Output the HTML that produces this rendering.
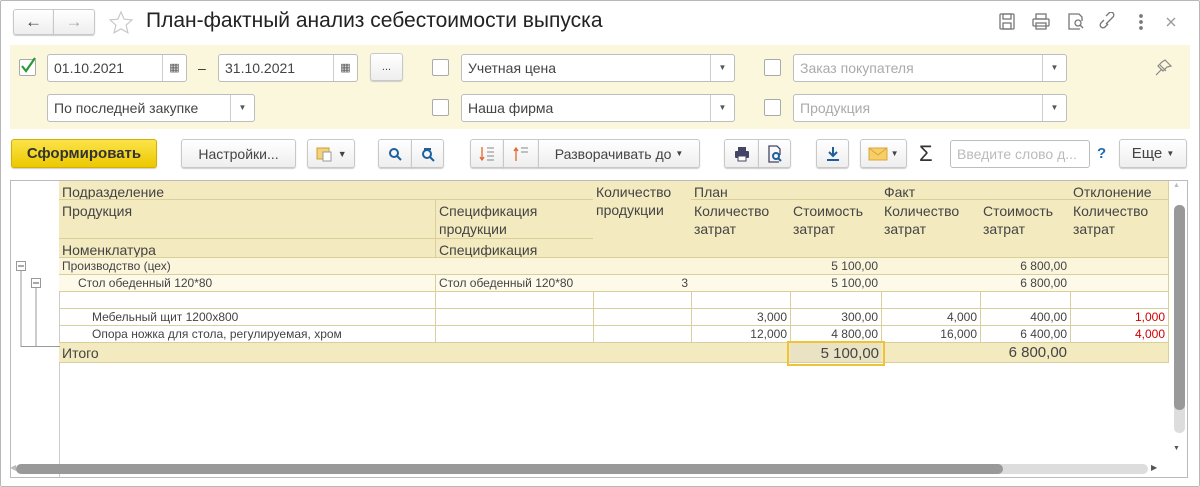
<!DOCTYPE html>
<html><head><meta charset="utf-8"><style>
*{box-sizing:border-box;margin:0;padding:0}
body{width:1200px;height:487px;background:#fff;font-family:"Liberation Sans",sans-serif;color:#333;position:relative;overflow:hidden}
.a{position:absolute}
.win{left:0;top:0;width:1200px;height:487px;border:1px solid #b8b8b8;border-radius:2px}
.btn{position:absolute;background:linear-gradient(#fff,#eee);border:1px solid #c8c8c8;border-radius:3px;box-shadow:0 1px 1px #ccc;font-size:14px;color:#444;display:flex;align-items:center;justify-content:center}
.fld{position:absolute;background:#fff;border:1px solid #bdbdbd;border-radius:3px;height:28px;font-size:14px;color:#444;padding-left:6px;line-height:26px}
.fld .dd{position:absolute;right:0;top:0;bottom:0;width:24px;border-left:1px solid #ccc;font-size:8px;text-align:center;line-height:26px;color:#555}
.cb{position:absolute;width:17px;height:17px;border:1px solid #aaa;border-radius:2px;background:#fff}
.c{position:absolute;border-right:1px solid #d8cf9c;border-bottom:1px solid #d8cf9c;font-size:14px;padding:2px 3px;color:#444;line-height:18px;white-space:nowrap;overflow:hidden}
.d{font-size:12px;padding:0 3px;line-height:16px}
.r{text-align:right}
.h{background:#f3eac0}
.red{color:#d20000}
</style></head><body>
<div class="a win"></div>
<div class="btn" style="left:13px;top:9px;width:41px;height:26px;border-radius:3px 0 0 3px;font-size:17px">&#8592;</div>
<div class="btn" style="left:53px;top:9px;width:42px;height:26px;border-radius:0 3px 3px 0;font-size:17px;color:#aaa">&#8594;</div>
<svg class="a" style="left:108px;top:10px" width="26" height="26" viewBox="0 0 26 26"><path d="M13 2l3.2 7.2 7.8.7-5.9 5.2 1.8 7.7L13 18.8 6.1 22.8l1.8-7.7L2 9.9l7.8-.7z" fill="none" stroke="#c8c8c8" stroke-width="1.2"/></svg>
<div class="a" style="left:146px;top:9px;font-size:21px;color:#222">План-фактный анализ себестоимости выпуска</div>
<svg class="a" style="left:998px;top:12px" width="190" height="20" viewBox="0 0 190 20" fill="none" stroke="#777" stroke-width="1.3">
<rect x="2" y="2" width="14" height="15" rx="1"/><rect x="5" y="2" width="8" height="5"/><rect x="5" y="11" width="8" height="6"/>
<rect x="38" y="2" width="10" height="5"/><rect x="35" y="7" width="16" height="7" rx="1"/><rect x="38" y="11" width="10" height="6"/>
<path d="M82 17H71V2h10l3 3v4"/><circle cx="80" cy="11" r="3"/><path d="M82 13l3 3"/>
<path d="M110 12l-3 3a2.5 2.5 0 01-4-4l3-3M112 8l3-3a2.5 2.5 0 00-4-4l-3 3M108 12l4-4"/>
<circle cx="143" cy="4" r="1.2" fill="#777"/><circle cx="143" cy="10" r="1.2" fill="#777"/><circle cx="143" cy="16" r="1.2" fill="#777"/>
<path d="M169 6l8 8M177 6l-8 8" stroke="#999"/>
</svg>
<div class="a" style="left:10px;top:45px;width:1180px;height:84px;background:#fbf7dc"></div>
<div class="cb" style="left:19px;top:59px"></div>
<svg class="a" style="left:19px;top:56px" width="19" height="19"><path d="M3 10l4 5 9-13" fill="none" stroke="#2a9a38" stroke-width="2.2"/></svg>
<div class="fld" style="left:47px;top:54px;width:140px">01.10.2021<div class="dd" style="font-size:11px">&#9638;</div></div>
<div class="a" style="left:198px;top:60px;font-size:14px">–</div>
<div class="fld" style="left:218px;top:54px;width:140px">31.10.2021<div class="dd" style="font-size:11px">&#9638;</div></div>
<div class="btn" style="left:370px;top:53px;width:33px;height:28px;font-size:11px">...</div>
<div class="cb" style="left:432px;top:59px"></div>
<div class="fld" style="left:461px;top:54px;width:274px">Учетная цена<div class="dd">&#9660;</div></div>
<div class="cb" style="left:764px;top:59px"></div>
<div class="fld" style="left:793px;top:54px;width:274px;color:#aaa">Заказ покупателя<div class="dd">&#9660;</div></div>
<svg class="a" style="left:1152px;top:57px" width="22" height="22" fill="none" stroke="#888" stroke-width="1.2"><path d="M4 18l6-6M8 8l6 6M13 3l6 6-4 1-4 4-5-5 4-4z"/></svg>
<div class="fld" style="left:47px;top:94px;width:208px">По последней закупке<div class="dd">&#9660;</div></div>
<div class="cb" style="left:432px;top:99px"></div>
<div class="fld" style="left:461px;top:94px;width:274px">Наша фирма<div class="dd">&#9660;</div></div>
<div class="cb" style="left:764px;top:99px"></div>
<div class="fld" style="left:793px;top:94px;width:274px;color:#aaa">Продукция<div class="dd">&#9660;</div></div>
<div class="btn" style="left:11px;top:139px;width:146px;height:29px;background:linear-gradient(#fbe449,#edc900);border-color:#d4b000;font-weight:bold;color:#333;font-size:15px">Сформировать</div>
<div class="btn" style="left:181px;top:139px;width:115px;height:29px">Настройки...</div>
<div class="btn" style="left:307px;top:139px;width:48px;height:29px;font-size:9px"><svg width="20" height="18"><rect x="2" y="3" width="12" height="11" fill="#f4d27a" stroke="#c9a03c"/><rect x="8" y="7" width="8" height="9" fill="#fff" stroke="#999"/></svg>&nbsp;&#9660;</div>
<div class="btn" style="left:378px;top:139px;width:34px;height:29px;border-radius:3px 0 0 3px"><svg width="16" height="16" fill="none" stroke="#1d5f9c" stroke-width="2"><circle cx="7" cy="7" r="4"/><path d="M10 10l4 4"/></svg></div>
<div class="btn" style="left:411px;top:139px;width:33px;height:29px;border-radius:0 3px 3px 0"><svg width="16" height="16" fill="none" stroke="#1d5f9c" stroke-width="2"><circle cx="7" cy="8" r="4"/><path d="M10 11l4 4M4 3h7"/></svg></div>
<div class="btn" style="left:470px;top:139px;width:34px;height:29px;border-radius:3px 0 0 3px"><svg width="16" height="18"><path d="M3 2v13M1 12l2 3 2-3" stroke="#e0682c" fill="none" stroke-width="1.3"/><path d="M8 3h7M8 7h7M8 11h7M8 15h7" stroke="#888"/></svg></div>
<div class="btn" style="left:503px;top:139px;width:36px;height:29px;border-radius:0"><svg width="16" height="18"><path d="M3 16V3M1 6l2-3 2 3" stroke="#e0682c" fill="none" stroke-width="1.3"/><path d="M8 3h7M8 7h7" stroke="#888"/></svg></div>
<div class="btn" style="left:538px;top:139px;width:162px;height:29px;border-radius:0 3px 3px 0">Разворачивать до&nbsp;<span style="font-size:8px">&#9660;</span></div>
<div class="btn" style="left:724px;top:139px;width:35px;height:29px;border-radius:3px 0 0 3px"><svg width="18" height="16"><rect x="5" y="1" width="8" height="4" fill="#446"/><rect x="2" y="5" width="14" height="7" rx="1" fill="#446"/><rect x="5" y="10" width="8" height="5" fill="#fff" stroke="#446"/></svg></div>
<div class="btn" style="left:758px;top:139px;width:33px;height:29px;border-radius:0 3px 3px 0"><svg width="16" height="18" fill="none" stroke="#446" stroke-width="1.3"><path d="M12 17H2V1h8l3 3v6"/><circle cx="9" cy="11" r="3" stroke="#1d5f9c" stroke-width="2"/><path d="M11 13l3 3" stroke="#1d5f9c" stroke-width="2"/></svg></div>
<div class="btn" style="left:816px;top:139px;width:33px;height:29px"><svg width="16" height="16" fill="none" stroke="#1d5f9c" stroke-width="2"><path d="M8 1v9M4 6l4 4 4-4M2 14h12"/></svg></div>
<div class="btn" style="left:860px;top:139px;width:47px;height:29px;font-size:8px"><svg width="20" height="14"><rect x="1" y="1" width="18" height="12" fill="#f6cf66" stroke="#d9a53a"/><path d="M1 1l9 7 9-7" fill="none" stroke="#d9a53a"/></svg>&nbsp;&#9660;</div>
<div class="a" style="left:919px;top:141px;font-size:22px;color:#333">&Sigma;</div>
<div class="fld" style="left:950px;top:140px;width:140px;height:28px;color:#bbb;font-size:14px">Введите слово д...</div>
<div class="a" style="left:1097px;top:145px;font-size:15px;color:#1d6bb5;font-weight:bold">?</div>
<div class="btn" style="left:1119px;top:139px;width:68px;height:29px;font-size:15px">Еще&nbsp;<span style="font-size:8px">&#9660;</span></div>
<div class="a" style="left:10px;top:180px;width:1178px;height:298px;border:1px solid #bbb"></div>
<div class="a" style="left:59px;top:181px;width:1px;height:296px;background:#ccc"></div>
<div class="c h" style="left:59px;top:181px;width:535px;height:19px">Подразделение</div>
<div class="c h" style="left:59px;top:200px;width:377px;height:39px">Продукция</div>
<div class="c h" style="left:436px;top:200px;width:158px;height:39px;white-space:normal">Спецификация продукции</div>
<div class="c h" style="left:59px;top:239px;width:377px;height:19px">Номенклатура</div>
<div class="c h" style="left:436px;top:239px;width:158px;height:19px">Спецификация</div>
<div class="c h" style="left:593px;top:181px;width:99px;height:77px;white-space:normal">Количество продукции</div>
<div class="c h" style="left:691px;top:181px;width:191px;height:19px">План</div>
<div class="c h" style="left:691px;top:200px;width:100px;height:58px;white-space:normal">Количество затрат</div>
<div class="c h" style="left:790px;top:200px;width:92px;height:58px;white-space:normal">Стоимость затрат</div>
<div class="c h" style="left:881px;top:181px;width:190px;height:19px">Факт</div>
<div class="c h" style="left:881px;top:200px;width:100px;height:58px;white-space:normal">Количество затрат</div>
<div class="c h" style="left:980px;top:200px;width:91px;height:58px;white-space:normal">Стоимость затрат</div>
<div class="c h" style="left:1070px;top:181px;width:99px;height:19px">Отклонение</div>
<div class="c h" style="left:1070px;top:200px;width:99px;height:58px;white-space:normal">Количество затрат</div>
<div class="c d" style="left:59px;top:258px;width:535px;height:17px;background:#fbf5dc">Производство (цех)</div>
<div class="c d" style="left:593px;top:258px;width:99px;height:17px;background:#fbf5dc"></div>
<div class="c d" style="left:691px;top:258px;width:100px;height:17px;background:#fbf5dc"></div>
<div class="c d r" style="left:790px;top:258px;width:92px;height:17px;background:#fbf5dc">5 100,00</div>
<div class="c d" style="left:881px;top:258px;width:100px;height:17px;background:#fbf5dc"></div>
<div class="c d r" style="left:980px;top:258px;width:91px;height:17px;background:#fbf5dc">6 800,00</div>
<div class="c d" style="left:1070px;top:258px;width:99px;height:17px;background:#fbf5dc"></div>
<div class="c d" style="left:59px;top:275px;width:377px;height:17px;background:#fdfaea;padding-left:19px">Стол обеденный 120*80</div>
<div class="c d" style="left:436px;top:275px;width:158px;height:17px;background:#fdfaea">Стол обеденный 120*80</div>
<div class="c d r" style="left:593px;top:275px;width:99px;height:17px;background:#fdfaea">3</div>
<div class="c d" style="left:691px;top:275px;width:100px;height:17px;background:#fdfaea"></div>
<div class="c d r" style="left:790px;top:275px;width:92px;height:17px;background:#fdfaea">5 100,00</div>
<div class="c d" style="left:881px;top:275px;width:100px;height:17px;background:#fdfaea"></div>
<div class="c d r" style="left:980px;top:275px;width:91px;height:17px;background:#fdfaea">6 800,00</div>
<div class="c d" style="left:1070px;top:275px;width:99px;height:17px;background:#fdfaea"></div>
<div class="c d" style="left:59px;top:292px;width:377px;height:17px"></div>
<div class="c d" style="left:436px;top:292px;width:158px;height:17px"></div>
<div class="c d" style="left:593px;top:292px;width:99px;height:17px"></div>
<div class="c d" style="left:691px;top:292px;width:100px;height:17px"></div>
<div class="c d" style="left:790px;top:292px;width:92px;height:17px"></div>
<div class="c d" style="left:881px;top:292px;width:100px;height:17px"></div>
<div class="c d" style="left:980px;top:292px;width:91px;height:17px"></div>
<div class="c d" style="left:1070px;top:292px;width:99px;height:17px"></div>
<div class="c d" style="left:59px;top:309px;width:377px;height:17px;padding-left:33px">Мебельный щит 1200x800</div>
<div class="c d" style="left:436px;top:309px;width:158px;height:17px"></div>
<div class="c d" style="left:593px;top:309px;width:99px;height:17px"></div>
<div class="c d r" style="left:691px;top:309px;width:100px;height:17px">3,000</div>
<div class="c d r" style="left:790px;top:309px;width:92px;height:17px">300,00</div>
<div class="c d r" style="left:881px;top:309px;width:100px;height:17px">4,000</div>
<div class="c d r" style="left:980px;top:309px;width:91px;height:17px">400,00</div>
<div class="c d r red" style="left:1070px;top:309px;width:99px;height:17px">1,000</div>
<div class="c d" style="left:59px;top:326px;width:377px;height:17px;padding-left:33px">Опора ножка для стола, регулируемая, хром</div>
<div class="c d" style="left:436px;top:326px;width:158px;height:17px"></div>
<div class="c d" style="left:593px;top:326px;width:99px;height:17px"></div>
<div class="c d r" style="left:691px;top:326px;width:100px;height:17px">12,000</div>
<div class="c d r" style="left:790px;top:326px;width:92px;height:17px">4 800,00</div>
<div class="c d r" style="left:881px;top:326px;width:100px;height:17px">16,000</div>
<div class="c d r" style="left:980px;top:326px;width:91px;height:17px">6 400,00</div>
<div class="c d r red" style="left:1070px;top:326px;width:99px;height:17px">4,000</div>
<div class="c h" style="left:59px;top:343px;width:535px;height:20px;line-height:16px">Итого</div>
<div class="c h" style="left:593px;top:343px;width:99px;height:20px"></div>
<div class="c h" style="left:691px;top:343px;width:100px;height:20px"></div>
<div class="c h r" style="left:790px;top:343px;width:92px;height:20px;background:#e9e3c4"></div>
<div class="c h" style="left:881px;top:343px;width:100px;height:20px"></div>
<div class="c h r" style="left:980px;top:343px;width:91px;height:20px;line-height:16px;font-size:15px">6 800,00</div>
<div class="c h" style="left:1070px;top:343px;width:99px;height:20px"></div>
<div class="a" style="left:787px;top:341px;width:98px;height:25px;border:2px solid #f0c23a;font-size:15px;text-align:right;padding:2px 4px;color:#444;line-height:18px">5 100,00</div>
<svg class="a" style="left:10px;top:258px" width="50" height="110" fill="none" stroke="#999">
<rect x="6.5" y="3.5" width="9" height="9" fill="#fff"/><path d="M8 8h6" stroke="#555"/>
<path d="M11 13v75.5h39"/>
<rect x="21.5" y="20.5" width="9" height="9" fill="#fff"/><path d="M23 25h6" stroke="#555"/>
<path d="M26 30v58"/>
</svg>
<div class="a" style="left:1173px;top:182px;font-size:7px;color:#bbb">&#9650;</div>
<div class="a" style="left:1174px;top:205px;width:11px;height:228px;background:#ddd;border-radius:5px"></div>
<div class="a" style="left:1174px;top:205px;width:11px;height:205px;background:#999;border-radius:5px"></div>
<div class="a" style="left:1173px;top:445px;font-size:7px;color:#555">&#9660;</div>
<div class="a" style="left:16px;top:464px;width:1132px;height:10px;background:#ddd;border-radius:5px"></div>
<div class="a" style="left:16px;top:464px;width:987px;height:10px;background:#999;border-radius:5px"></div>
<div class="a" style="left:1151px;top:463px;font-size:8px;color:#555">&#9654;</div>
<div class="a" style="left:10px;top:463px;font-size:8px;color:#bbb">&#9664;</div>
</body></html>
